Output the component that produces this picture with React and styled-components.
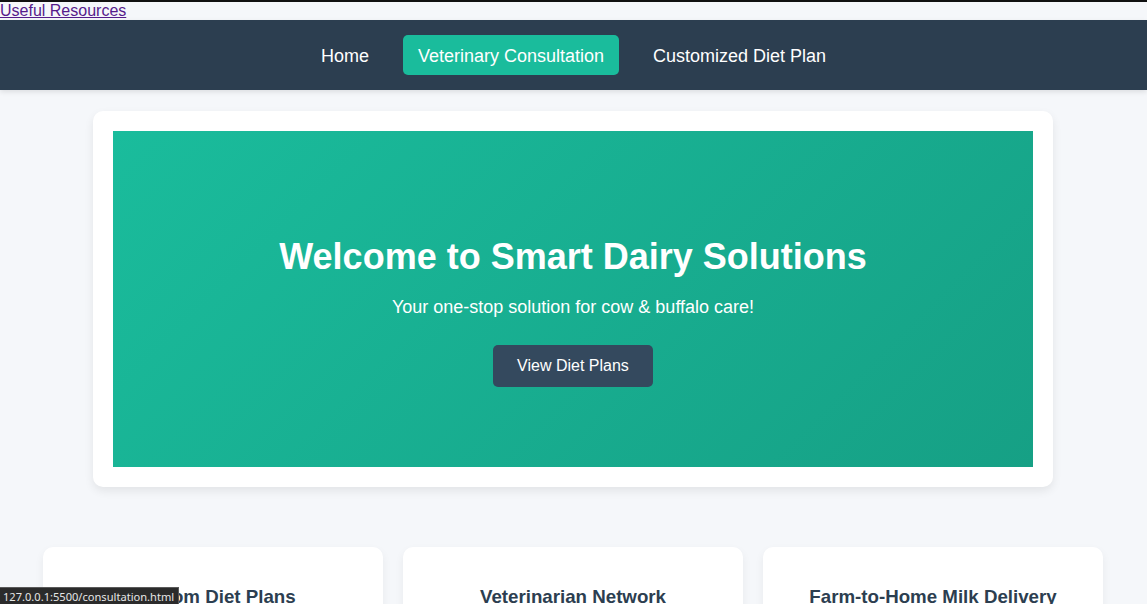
import styled, { createGlobalStyle } from 'styled-components';

const GlobalStyle = createGlobalStyle`
    html, body {
        margin: 0;
        padding: 0;
    }

    body {
        font-family: "Liberation Sans", Arial, sans-serif;
        background-color: #f5f7fa;
        color: #333333;
        border-top: 2px solid #111111;
    }
`

const TopLink = styled.a`
    display: inline-block;
    font-size: 16px;
    line-height: 18px;
    color: #551a8b;
    text-decoration: underline;
`

const Nav = styled.nav`
    display: flex;
    justify-content: center;
    align-items: center;
    gap: 19px;
    height: 70px;
    background-color: #2c3e50;
    box-shadow: 0px 2px 5px rgba(0, 0, 0, 0.1);
`

const NavLink = styled.a`
    display: block;
    padding: 11px 15px 9px;
    font-size: 18px;
    line-height: 20px;
    color: #ffffff;
    text-decoration: none;
    border-radius: 5px;
    background-color: ${(props) => (props.$active ? '#1abc9c' : 'transparent')};
    cursor: pointer;
`

const Main = styled.main`
    display: flex;
    flex-direction: column;
    align-items: center;
    padding: 21px 1px 0 0;
`

const HeroCard = styled.section`
    width: 960px;
    box-sizing: border-box;
    padding: 20px;
    background: #ffffff;
    border-radius: 10px;
    box-shadow: 0px 4px 10px rgba(0, 0, 0, 0.08);
`

const Hero = styled.div`
    display: flex;
    flex-direction: column;
    align-items: center;
    height: 336px;
    box-sizing: border-box;
    padding: 105px 20px 0;
    background: linear-gradient(135deg, #1abc9c, #16a085);
    color: #ffffff;
    text-align: center;

    h1 {
        margin: 0 0 20px;
        font-size: 36px;
        line-height: 41px;
        font-weight: 700;
    }

    p {
        margin: 0 0 27px;
        font-size: 18px;
        line-height: 21px;
    }
`

const HeroButton = styled.button`
    width: 160px;
    height: 42px;
    border: none;
    border-radius: 5px;
    background-color: #34495e;
    color: #ffffff;
    font-family: "Liberation Sans", Arial, sans-serif;
    font-size: 16px;
    cursor: pointer;
`

const Features = styled.div`
    display: grid;
    grid-template-columns: repeat(3, 340px);
    gap: 20px;
    margin-top: 60px;
`

const FeatureCard = styled.div`
    padding: 20px;
    min-height: 160px;
    background: #ffffff;
    border-radius: 10px;
    box-shadow: 0px 4px 10px rgba(0, 0, 0, 0.06);
    text-align: center;

    h3 {
        margin: 19px 0;
        font-size: 18.72px;
        line-height: 21px;
        color: #2c3e50;
    }
`

const StatusTip = styled.div`
    position: fixed;
    left: 0;
    bottom: 0;
    height: 16px;
    padding: 0 4px 0 3px;
    background: #2b2b2b;
    border-top: 1px solid #5a5a5a;
    border-right: 1px solid #5a5a5a;
    color: #e6e6e6;
    font-family: "Noto Sans", "Open Sans", sans-serif;
    font-size: 11.1px;
    line-height: 17px;
    white-space: nowrap;
`

const features = ['Custom Diet Plans', 'Veterinarian Network', 'Farm-to-Home Milk Delivery'];

const App = () => (
    <>
        <GlobalStyle />
        <TopLink href="#resources">Useful Resources</TopLink>
        <Nav>
            <NavLink href="#home">Home</NavLink>
            <NavLink href="#consultation" $active>Veterinary Consultation</NavLink>
            <NavLink href="#diet">Customized Diet Plan</NavLink>
        </Nav>
        <Main>
            <HeroCard>
                <Hero>
                    <h1>Welcome to Smart Dairy Solutions</h1>
                    <p>Your one-stop solution for cow &amp; buffalo care!</p>
                    <HeroButton>View Diet Plans</HeroButton>
                </Hero>
            </HeroCard>
            <Features>
                {features.map((title) => (
                    <FeatureCard key={title}>
                        <h3>{title}</h3>
                    </FeatureCard>
                ))}
            </Features>
        </Main>
        <StatusTip>127.0.0.1:5500/consultation.html</StatusTip>
    </>
);

export default App;
